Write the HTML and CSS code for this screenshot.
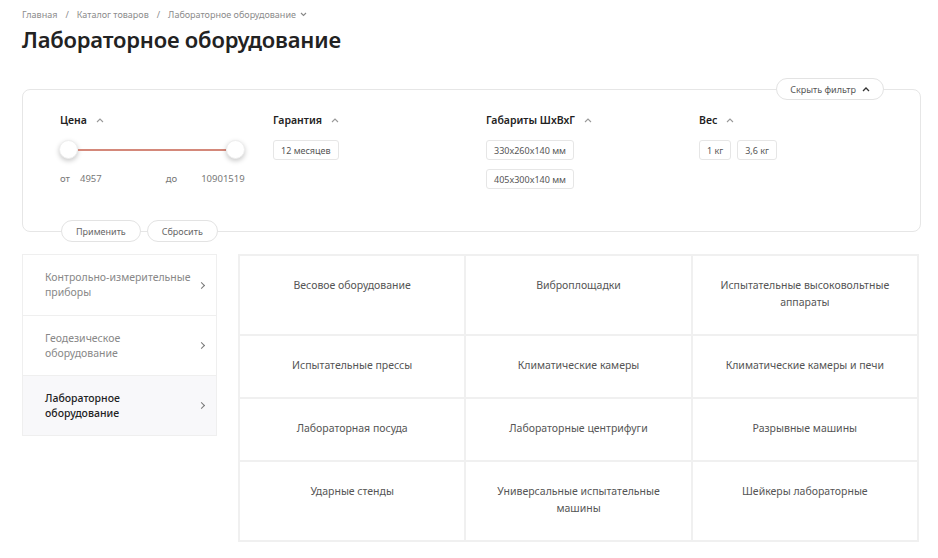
FILE: index.html
```html
<!DOCTYPE html>
<html lang="ru">
<head>
    <meta charset="UTF-8">
    <title>Лабораторное оборудование</title>
    <link rel="stylesheet" href="styles.css">
</head>
<body>
    <div class="page">
        <div class="breadcrumbs">
            <a href="#">Главная</a>
            <span class="sep">/</span>
            <a href="#">Каталог товаров</a>
            <span class="sep">/</span>
            <a href="#">Лабораторное оборудование</a>
            <svg class="crumb-arrow" width="7" height="5" viewBox="0 0 7 5"><path d="M1 1l2.5 2.5L6 1" fill="none" stroke="#888" stroke-width="1.1"/></svg>
        </div>

        <h1>Лабораторное оборудование</h1>

        <div class="filter-top">
            <button class="pill-btn hide-btn">Скрыть фильтр
                <svg width="8" height="5" viewBox="0 0 8 5"><path d="M1 4l3-3 3 3" fill="none" stroke="#333" stroke-width="1.3"/></svg>
            </button>
        </div>

        <div class="filter">
            <div class="filter-col">
                <div class="filter-title">Цена <svg width="8" height="5" viewBox="0 0 8 5"><path d="M1 4l3-3 3 3" fill="none" stroke="#999" stroke-width="1.1"/></svg></div>
                <div class="slider">
                    <span class="handle"></span>
                    <span class="track"></span>
                    <span class="handle"></span>
                </div>
                <div class="range-values">
                    <span class="lbl">от</span><span class="val">4957</span>
                    <span class="lbl lbl-to">до</span><span class="val val-to">10901519</span>
                </div>
            </div>
            <div class="filter-col">
                <div class="filter-title">Гарантия <svg width="8" height="5" viewBox="0 0 8 5"><path d="M1 4l3-3 3 3" fill="none" stroke="#999" stroke-width="1.1"/></svg></div>
                <div class="chips">
                    <span class="chip">12 месяцев</span>
                </div>
            </div>
            <div class="filter-col">
                <div class="filter-title">Габариты ШхВхГ <svg width="8" height="5" viewBox="0 0 8 5"><path d="M1 4l3-3 3 3" fill="none" stroke="#999" stroke-width="1.1"/></svg></div>
                <div class="chips chips-col">
                    <span class="chip">330x260x140 мм</span>
                    <span class="chip">405x300x140 мм</span>
                </div>
            </div>
            <div class="filter-col">
                <div class="filter-title">Вес <svg width="8" height="5" viewBox="0 0 8 5"><path d="M1 4l3-3 3 3" fill="none" stroke="#999" stroke-width="1.1"/></svg></div>
                <div class="chips">
                    <span class="chip">1 кг</span>
                    <span class="chip">3,6 кг</span>
                </div>
            </div>
        </div>

        <div class="filter-actions">
            <button class="pill-btn">Применить</button>
            <button class="pill-btn">Сбросить</button>
        </div>

        <div class="catalog">
            <div class="sidebar">
                <a href="#" class="side-item"><span>Контрольно-измерительные приборы</span><i class="chev"></i></a>
                <a href="#" class="side-item"><span>Геодезическое оборудование</span><i class="chev"></i></a>
                <a href="#" class="side-item active"><span>Лабораторное оборудование</span><i class="chev"></i></a>
            </div>
            <div class="grid">
                <a href="#" class="cell">Весовое оборудование</a>
                <a href="#" class="cell">Виброплощадки</a>
                <a href="#" class="cell">Испытательные высоковольтные аппараты</a>
                <a href="#" class="cell">Испытательные прессы</a>
                <a href="#" class="cell">Климатические камеры</a>
                <a href="#" class="cell">Климатические камеры и печи</a>
                <a href="#" class="cell">Лабораторная посуда</a>
                <a href="#" class="cell">Лабораторные центрифуги</a>
                <a href="#" class="cell">Разрывные машины</a>
                <a href="#" class="cell">Ударные стенды</a>
                <a href="#" class="cell">Универсальные испытательные машины</a>
                <a href="#" class="cell">Шейкеры лабораторные</a>
            </div>
        </div>
    </div>
</body>
</html>
```

FILE: styles.css
```css
body {
    margin: 0;
    font-family: "Noto Sans", Arial, sans-serif;
    color: #222;
    background: #fff;
}

a {
    text-decoration: none;
    color: inherit;
}

.page {
    padding: 7px 17px 0 22px;
}

/* Breadcrumbs */
.breadcrumbs {
    display: flex;
    align-items: center;
    font-size: 9px;
    color: #8c8c8c;
    height: 14px;
}

.breadcrumbs .sep {
    margin: 0 8px;
}

.crumb-arrow {
    margin-left: 4px;
}

h1 {
    margin: 3px 0 0;
    font-size: 22px;
    font-weight: 600;
    line-height: 30px;
    color: #222;
    letter-spacing: -0.2px;
}

/* Filter */
.pill-btn {
    font-family: inherit;
    font-size: 9px;
    color: #666;
    background: #fff;
    border: 1px solid #e3e3e3;
    border-radius: 12px;
    height: 22px;
    padding: 0 14px;
    cursor: pointer;
}

.filter-top {
    display: flex;
    justify-content: flex-end;
    margin-top: 24px;
    margin-bottom: -11px;
    padding-right: 37px;
    position: relative;
    z-index: 1;
}

.hide-btn {
    display: flex;
    align-items: center;
    gap: 6px;
    padding: 0 13px;
    color: #555;
}

.filter {
    display: flex;
    border: 1px solid #e6e6e6;
    border-radius: 8px;
    height: 143px;
    box-sizing: border-box;
    padding: 23px 0 0 37px;
}

.filter-col {
    width: 213px;
}

.filter-title {
    display: flex;
    align-items: center;
    gap: 9px;
    font-size: 10.5px;
    font-weight: 600;
    line-height: 14px;
    color: #222;
}

.slider {
    display: flex;
    align-items: center;
    width: 186px;
    margin-top: 13px;
    margin-left: -1px;
}

.handle {
    width: 17px;
    height: 17px;
    border-radius: 50%;
    background: #fff;
    border: 1px solid #eee;
    box-shadow: 0 2px 5px rgba(0, 0, 0, 0.22);
    flex: none;
}

.track {
    flex: 1;
    height: 2px;
    background: #d4887a;
}

.range-values {
    display: flex;
    font-size: 9.5px;
    color: #777;
    margin-top: 13px;
    line-height: 14px;
}

.range-values .val {
    margin-left: 10px;
}

.range-values .lbl-to {
    margin-left: 64px;
}

.range-values .val-to {
    margin-left: 24px;
}

.chips {
    display: flex;
    gap: 6px;
    margin-top: 13px;
}

.chips-col {
    flex-direction: column;
    align-items: flex-start;
    gap: 9px;
}

.chip {
    display: inline-flex;
    align-items: center;
    height: 20px;
    box-sizing: border-box;
    padding: 0 7px;
    border: 1px solid #e6e6e6;
    border-radius: 3px;
    font-size: 9px;
    color: #555;
}

.filter-actions {
    display: flex;
    gap: 6px;
    margin-top: -12px;
    padding-left: 39px;
}

.filter-actions .pill-btn {
    padding: 0 14px;
}

/* Catalog */
.catalog {
    display: flex;
    gap: 21px;
    margin-top: 12px;
    align-items: flex-start;
}

.sidebar {
    width: 195px;
    border: 1px solid #efefef;
    box-sizing: border-box;
}

.side-item {
    display: flex;
    align-items: center;
    justify-content: space-between;
    height: 60px;
    box-sizing: border-box;
    padding: 0 12px 0 22px;
    font-size: 10.5px;
    line-height: 15px;
    color: #888;
    border-top: 1px solid #efefef;
}

.side-item:first-child {
    border-top: none;
}

.side-item span {
    width: 150px;
}

.side-item.active {
    background: #f8f8fa;
    color: #222;
    font-weight: 500;
}

.chev {
    width: 4px;
    height: 4px;
    border-right: 1px solid #777;
    border-top: 1px solid #777;
    transform: rotate(45deg);
}

.grid {
    width: 681px;
    display: grid;
    grid-template-columns: repeat(3, 1fr);
    border-top: 2px solid #f0f0f0;
    border-left: 2px solid #f0f0f0;
    box-sizing: border-box;
}

.cell {
    border-right: 2px solid #f0f0f0;
    border-bottom: 2px solid #f0f0f0;
    padding: 21px 16px 23px;
    text-align: center;
    font-size: 10.5px;
    line-height: 17px;
    color: #555;
    min-height: 63px;
    box-sizing: border-box;
}
```
